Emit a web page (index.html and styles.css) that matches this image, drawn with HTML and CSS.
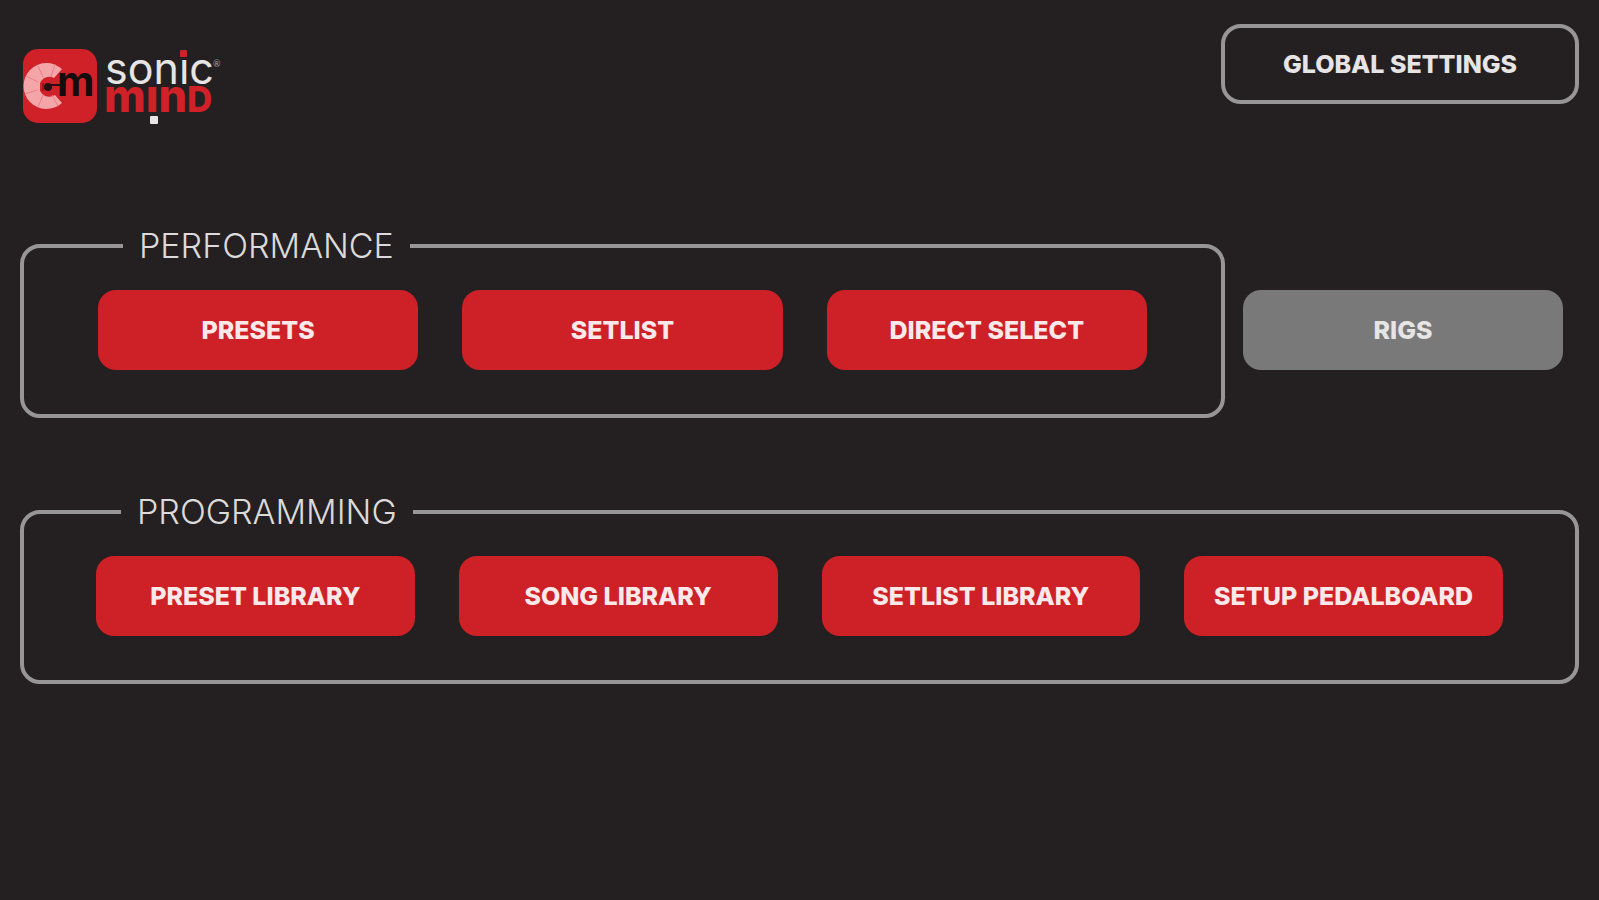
FILE: index.html
```
<!DOCTYPE html>
<html lang="en">
  <head>
    <meta charset="utf-8">
    <meta name="viewport" content="width=device-width, initial-scale=1">
    <title>Sonic Mind</title>
    <link rel="stylesheet" href="styles.css">
  </head>
<body>
<header class="header">
  <svg class="logo" viewBox="0 0 204 80" role="img" aria-label="Sonic Mind">
    <rect x="3" y="2" width="74" height="74" rx="15" fill="#d02128"/>
    <!-- record with the grooves -->
    <path d="M42 22 A23 23 0 1 0 42 56 L35 48 A10 10 0 1 1 34 31 Z" fill="#f3a5a8"/>
    <path d="M35 17 L31 30 M38 59 L32 48 M18 19 L23 30 M6 29 L18 35 M5 47 L17 43 M18 60 L23 48" stroke="#e98085" stroke-width="1"/>
    <path d="M19 34 V44" stroke="#f3a5a8" stroke-width="2"/>
    <path d="M23 36 V44" stroke="#a01218" stroke-width="2"/>
    <circle cx="28" cy="40" r="4" fill="#241012"/>
    <path d="M28 38 H40" stroke="#241012" stroke-width="2"/>
    <text class="logo-m" x="37" y="49">m</text>
    <text class="logo-sonic" x="85" y="37">sonıc</text>
    <rect x="160" y="3" width="7" height="7" rx="1" fill="#d02128"/>
    <text class="logo-tm" x="193" y="20">®</text>
    <text class="logo-mind" x="84" y="65">mın<tspan class="logo-d">D</tspan></text>
    <rect x="130" y="69" width="8" height="8" rx="1" fill="#e6e4e4"/>
  </svg>
  <button type="button" class="btn btn-outline">GLOBAL SETTINGS</button>
</header>

<main class="main">
  <div class="row">
    <fieldset class="group performance">
      <legend>PERFORMANCE</legend>
      <div class="buttons">
        <button type="button" class="btn">PRESETS</button>
        <button type="button" class="btn">SETLIST</button>
        <button type="button" class="btn">DIRECT SELECT</button>
      </div>
    </fieldset>
    <button type="button" class="btn btn-rigs">RIGS</button>
  </div>

  <fieldset class="group programming">
    <legend>PROGRAMMING</legend>
    <div class="buttons">
      <button type="button" class="btn">PRESET LIBRARY</button>
      <button type="button" class="btn">SONG LIBRARY</button>
      <button type="button" class="btn">SETLIST LIBRARY</button>
      <button type="button" class="btn">SETUP PEDALBOARD</button>
    </div>
  </fieldset>
</main>
</body>
</html>
```

FILE: styles.css
```
* {
  box-sizing: border-box;
}

body {
  margin: 0;
  padding: 24px 20px;
  background-color: #242021;
  color: #dcdada;
  font-family: Inter, "Liberation Sans", sans-serif;
}

.header {
  display: flex;
  justify-content: space-between;
  align-items: flex-start;
}

.logo {
  width: 204px;
  height: 80px;
  margin-top: 23px;
  overflow: visible;
}

.logo-m {
  font: 700 41px Inter, sans-serif;
  fill: #150c0d;
}

.logo-sonic {
  font: 400 43px Inter, sans-serif;
  fill: #e6e4e4;
}

.logo-tm {
  font: 400 9px Lato, sans-serif;
  fill: #a5a2a2;
}

.logo-mind {
  font: 800 45px Inter, sans-serif;
  fill: #d02128;
}

.logo-d {
  font-size: 35px;
}

.btn {
  height: 80px;
  padding: 0;
  border: none;
  border-radius: 18px;
  background-color: #ce2027;
  color: #fbe9ea;
  font-family: inherit;
  font-size: 25px;
  font-weight: 800;
  white-space: nowrap;
  cursor: pointer;
}

.btn:hover {
  background-color: #b81c22;
}

.btn-outline {
  width: 358px;
  border: 4px solid #989596;
  border-radius: 20px;
  background-color: transparent;
  color: #e6e4e4;
}

.main {
  padding-top: 99px;
}

.row {
  display: flex;
  align-items: flex-end;
  margin-bottom: 74px;
}

.group {
  min-width: 0;
  margin: 0;
  border: 4px solid #989596;
  border-radius: 20px;
}

.performance {
  flex: 1;
  padding: 24px 74px 44px;
}

.programming {
  padding: 24px 72px 44px;
}

.group legend {
  margin-left: 25px;
  padding: 0 16px;
  font-size: 34px;
  font-weight: 300;
  line-height: 40px;
}

.buttons {
  display: grid;
  grid-auto-flow: column;
  grid-auto-columns: 1fr;
  gap: 44px;
}

.btn-rigs {
  flex: 0 0 320px;
  margin: 0 16px 48px 18px;
  background-color: #797979;
  color: #e6e4e4;
}

.btn-rigs:hover {
  background-color: #686868;
}
```
